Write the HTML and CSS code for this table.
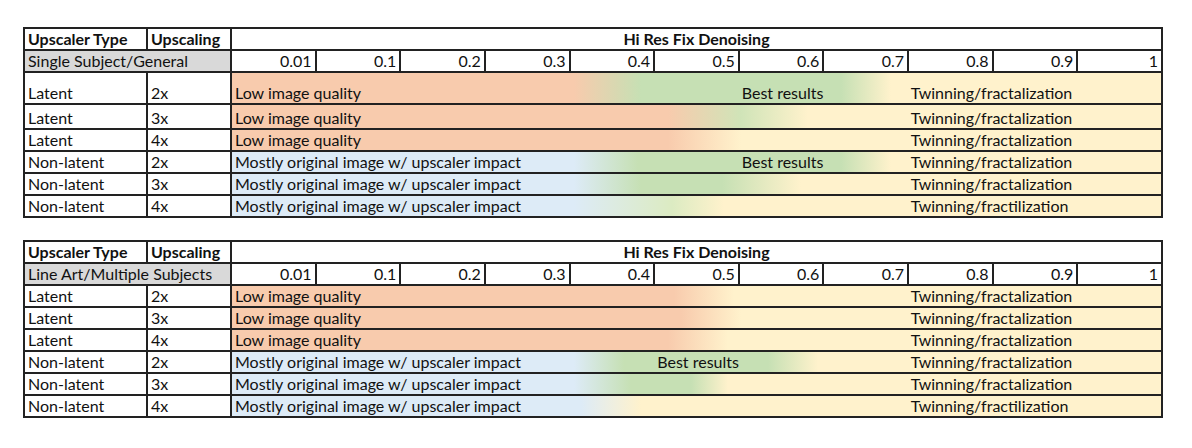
FILE: index.html
```html
<!DOCTYPE html>
<html lang="en">
<head>
<meta charset="utf-8">
<title>Hi Res Fix Denoising</title>
<link rel="stylesheet" href="styles.css">
</head>
<body>
<main class="sheet">
  <table class="grid">
    <colgroup><col class="c-type"><col class="c-scale"><col span="11" class="c-d"></colgroup>
    <tr class="hdr"><th>Upscaler Type</th><th>Upscaling</th><th colspan="11" class="center">Hi Res Fix Denoising</th></tr>
    <tr class="sub"><td colspan="2" class="gray">Single Subject/General</td><td class="num">0.01</td><td class="num">0.1</td><td class="num">0.2</td><td class="num">0.3</td><td class="num">0.4</td><td class="num">0.5</td><td class="num">0.6</td><td class="num">0.7</td><td class="num">0.8</td><td class="num">0.9</td><td class="num">1</td></tr>
    <tr class="row tall"><td>Latent</td><td>2x</td><td colspan="11" class="band t1-l2"><div class="cells"><span class="at1">Low image quality</span><span class="at7">Best results</span><span class="at9">Twinning/fractalization</span></div></td></tr>
    <tr class="row mid"><td>Latent</td><td>3x</td><td colspan="11" class="band t1-l3"><div class="cells"><span class="at1">Low image quality</span><span class="at9">Twinning/fractalization</span></div></td></tr>
    <tr class="row"><td>Latent</td><td>4x</td><td colspan="11" class="band t1-l4"><div class="cells"><span class="at1">Low image quality</span><span class="at9">Twinning/fractalization</span></div></td></tr>
    <tr class="row"><td>Non-latent</td><td>2x</td><td colspan="11" class="band t1-n2"><div class="cells"><span class="at1">Mostly original image w/ upscaler impact</span><span class="at7">Best results</span><span class="at9">Twinning/fractalization</span></div></td></tr>
    <tr class="row"><td>Non-latent</td><td>3x</td><td colspan="11" class="band t1-n3"><div class="cells"><span class="at1">Mostly original image w/ upscaler impact</span><span class="at9">Twinning/fractalization</span></div></td></tr>
    <tr class="row"><td>Non-latent</td><td>4x</td><td colspan="11" class="band t1-n4"><div class="cells"><span class="at1">Mostly original image w/ upscaler impact</span><span class="at9">Twinning/fractilization</span></div></td></tr>
  </table>

  <table class="grid">
    <colgroup><col class="c-type"><col class="c-scale"><col span="11" class="c-d"></colgroup>
    <tr class="hdr"><th>Upscaler Type</th><th>Upscaling</th><th colspan="11" class="center">Hi Res Fix Denoising</th></tr>
    <tr class="sub"><td colspan="2" class="gray">Line Art/Multiple Subjects</td><td class="num">0.01</td><td class="num">0.1</td><td class="num">0.2</td><td class="num">0.3</td><td class="num">0.4</td><td class="num">0.5</td><td class="num">0.6</td><td class="num">0.7</td><td class="num">0.8</td><td class="num">0.9</td><td class="num">1</td></tr>
    <tr class="row"><td>Latent</td><td>2x</td><td colspan="11" class="band t2-l2"><div class="cells"><span class="at1">Low image quality</span><span class="at9">Twinning/fractalization</span></div></td></tr>
    <tr class="row"><td>Latent</td><td>3x</td><td colspan="11" class="band t2-l3"><div class="cells"><span class="at1">Low image quality</span><span class="at9">Twinning/fractalization</span></div></td></tr>
    <tr class="row"><td>Latent</td><td>4x</td><td colspan="11" class="band t2-l4"><div class="cells"><span class="at1">Low image quality</span><span class="at9">Twinning/fractalization</span></div></td></tr>
    <tr class="row"><td>Non-latent</td><td>2x</td><td colspan="11" class="band t2-n2"><div class="cells"><span class="at1">Mostly original image w/ upscaler impact</span><span class="at6">Best results</span><span class="at9">Twinning/fractalization</span></div></td></tr>
    <tr class="row"><td>Non-latent</td><td>3x</td><td colspan="11" class="band t2-n3"><div class="cells"><span class="at1">Mostly original image w/ upscaler impact</span><span class="at9">Twinning/fractalization</span></div></td></tr>
    <tr class="row"><td>Non-latent</td><td>4x</td><td colspan="11" class="band t2-n4"><div class="cells"><span class="at1">Mostly original image w/ upscaler impact</span><span class="at9">Twinning/fractilization</span></div></td></tr>
  </table>
</main>
</body>
</html>
```

FILE: styles.css
```css
html, body {
  margin: 0;
  padding: 0;
  background: #ffffff;
}

body {
  font-family: "Lato", "Open Sans", sans-serif;
  font-size: 16px;
  color: #111111;
}

.sheet {
  display: flex;
  flex-direction: column;
  gap: 22px;
  padding: 27px 0 0 23px;
}

.grid {
  border-collapse: collapse;
  table-layout: fixed;
  width: 1140px;
}

.c-type { width: 123px; }
.c-scale { width: 84px; }

.grid th,
.grid td {
  border: 2px solid #222222;
  padding: 0 3px 1px 3px;
  white-space: nowrap;
  overflow: visible;
  vertical-align: bottom;
  text-align: left;
  line-height: 18px;
}

.grid th {
  font-weight: 700;
}

.grid th.center {
  text-align: center;
}

.hdr { height: 22px; }
.sub { height: 22px; }
.row { height: 22px; }
.row.tall { height: 32px; }
.row.mid { height: 25px; }

.gray {
  background: #d9d9d9;
}

.num {
  text-align: right !important;
}

.band {
  padding: 0 !important;
}

.cells {
  display: grid;
  grid-template-columns: repeat(11, 1fr);
  padding-bottom: 1px;
}

.cells span {
  white-space: nowrap;
  padding-left: 3px;
  grid-row: 1;
}

.at1 { grid-column: 1 / span 5; }
.at6 { grid-column: 6 / span 2; }
.at7 { grid-column: 7 / span 2; }
.at9 { grid-column: 9 / span 3; }

/* colour bands: orange #f8cbad, green #c6e0b4, yellow #fff2cc, blue #ddebf7 */
.t1-l2 { background: linear-gradient(to right, #f8cbad 0, #f8cbad 342px, #c6e0b4 409px, #c6e0b4 609px, #fff2cc 659px, #fff2cc 100%); }
.t1-l3 { background: linear-gradient(to right, #f8cbad 0, #f8cbad 436px, #d0e4b8 509px, #fff2cc 576px, #fff2cc 100%); }
.t1-l4 { background: linear-gradient(to right, #f8cbad 0, #f8cbad 436px, #fff2cc 509px, #fff2cc 100%); }
.t1-n2 { background: linear-gradient(to right, #ddebf7 0, #ddebf7 342px, #c6e0b4 406px, #c6e0b4 609px, #fff2cc 659px, #fff2cc 100%); }
.t1-n3 { background: linear-gradient(to right, #ddebf7 0, #ddebf7 342px, #c6e0b4 409px, #c6e0b4 490px, #fff2cc 569px, #fff2cc 100%); }
.t1-n4 { background: linear-gradient(to right, #ddebf7 0, #ddebf7 342px, #dcebc2 440px, #fff2cc 492px, #fff2cc 100%); }

.t2-l2 { background: linear-gradient(to right, #f8cbad 0, #f8cbad 442px, #fff2cc 502px, #fff2cc 100%); }
.t2-l3 { background: linear-gradient(to right, #f8cbad 0, #f8cbad 449px, #fff2cc 509px, #fff2cc 100%); }
.t2-l4 { background: linear-gradient(to right, #f8cbad 0, #f8cbad 436px, #fff2cc 496px, #fff2cc 100%); }
.t2-n2 { background: linear-gradient(to right, #ddebf7 0, #ddebf7 342px, #c6e0b4 392px, #c6e0b4 536px, #fff2cc 586px, #fff2cc 100%); }
.t2-n3 { background: linear-gradient(to right, #ddebf7 0, #ddebf7 342px, #c6e0b4 399px, #c6e0b4 459px, #fff2cc 496px, #fff2cc 100%); }
.t2-n4 { background: linear-gradient(to right, #ddebf7 0, #ddebf7 349px, #fff2cc 409px, #fff2cc 100%); }
```
